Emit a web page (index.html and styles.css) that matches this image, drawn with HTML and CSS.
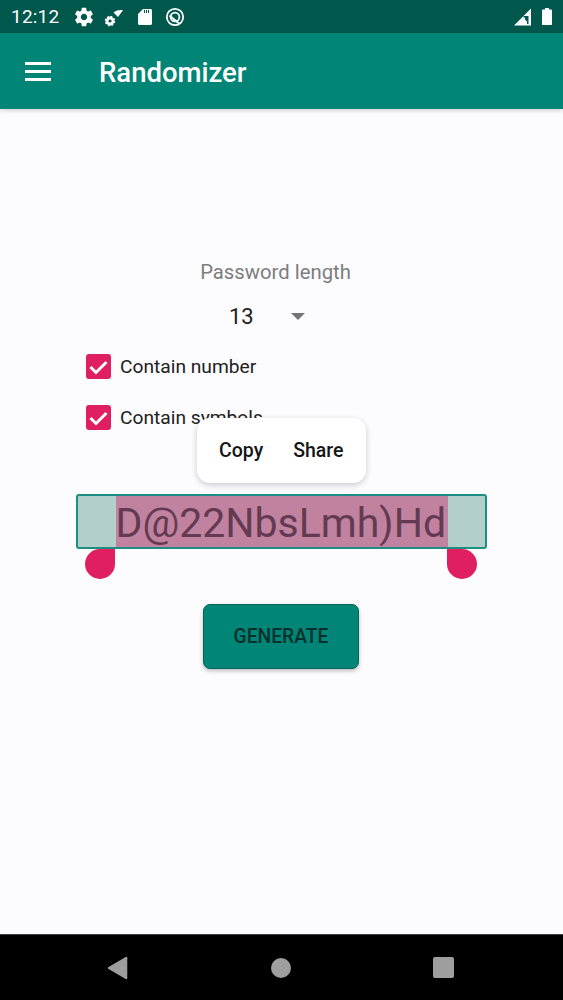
FILE: index.html
```html
<!DOCTYPE html>
<html lang="en">
<head>
  <meta charset="UTF-8" />
  <title>Randomizer</title>
  <link rel="stylesheet" href="styles.css">
</head>
<body>
  <div class="phone">
    <div class="status-bar">
      <span class="clock">12:12</span>
      <div class="status-icons">
        <svg width="22" height="22" viewBox="0 0 24 24"><path fill="#fff" d="M19.4 13c.04-.33.1-.66.1-1s-.06-.67-.1-1l2.1-1.65c.19-.15.24-.42.12-.64l-2-3.46c-.12-.22-.39-.3-.61-.22l-2.49 1c-.52-.4-1.08-.73-1.69-.98l-.38-2.65C14.46 2.18 14.25 2 14 2h-4c-.25 0-.46.18-.49.42l-.38 2.65c-.61.25-1.17.59-1.69.98l-2.49-1c-.23-.09-.49 0-.61.22l-2 3.46c-.13.22-.07.49.12.64L4.57 11c-.04.33-.07.67-.07 1s.03.67.07 1l-2.11 1.65c-.19.15-.24.42-.12.64l2 3.46c.12.22.39.3.61.22l2.49-1c.52.4 1.08.73 1.69.98l.38 2.65c.03.24.24.42.49.42h4c.25 0 .46-.18.49-.42l.38-2.65c.61-.25 1.17-.59 1.69-.98l2.49 1c.23.09.49 0 .61-.22l2-3.46c.12-.22.07-.49-.12-.64L19.4 13zM12 15.5c-1.93 0-3.5-1.57-3.5-3.5s1.57-3.5 3.5-3.5 3.5 1.57 3.5 3.5-1.57 3.5-3.5 3.5z"/></svg>
        <svg class="wifi-icon" width="20" height="20" viewBox="0 0 20 20"><path fill="#fff" d="M9.500 5.500 C12 3.500 15.500 2.700 19 3.200 L14 10 Z"/><circle cx="6" cy="14" r="3" fill="none" stroke="#fff" stroke-width="2.800"/><circle cx="6" cy="14" r="4.600" fill="none" stroke="#fff" stroke-width="1.300" stroke-dasharray="2 1.600"/></svg>
        <svg class="sd-icon" width="16" height="18" viewBox="0 0 16 18"><path fill="#fff" d="M6 1h7.500c.8 0 1.500.7 1.500 1.500v13c0 .8-.7 1.500-1.500 1.500h-11c-.8 0-1.500-.7-1.500-1.500V6z"/><path stroke="#00574b" stroke-width="1" d="M7.500 2v3M9.500 2v3M11.500 2v3"/></svg>
        <svg width="20" height="20" viewBox="0 0 20 20"><circle cx="10" cy="10" r="8.200" fill="none" stroke="#fff" stroke-width="1.800"/><circle cx="10" cy="10" r="4.400" fill="none" stroke="#fff" stroke-width="1.800"/><path stroke="#fff" stroke-width="1.800" d="M4.500 8.500 L14 16.500"/></svg>
      </div>
      <div class="status-right">
        <svg width="18" height="18" viewBox="0 0 18 18"><path fill="#fff" d="M0 17.500 L17 .5 V17.500Z"/><path fill="#00574b" d="M9.500 8h5v8h-1.500v-2.500l-2-2v-2h-1.500z"/></svg>
        <svg width="12" height="19" viewBox="0 0 12 19"><path fill="#fff" d="M4 1h4v1.500h2c.6 0 1 .4 1 1V17c0 .6-.4 1-1 1H2c-.6 0-1-.4-1-1V3.500c0-.6.4-1 1-1h2z"/></svg>
      </div>
    </div>

    <header class="app-bar">
      <div class="menu-icon"><span></span><span></span><span></span></div>
      <h1 class="app-title">Randomizer</h1>
    </header>

    <main class="content">
      <div class="length-label">Password length</div>
      <div class="spinner">
        <span class="spinner-value">13</span>
        <span class="spinner-arrow"></span>
      </div>

      <div class="check-row">
        <span class="checkbox"><svg width="25" height="25" viewBox="0 0 25 25"><path fill="none" stroke="#fff" stroke-width="3" d="M4.500 13l5.500 5.500L20.500 8"/></svg></span>
        <span class="check-label">Contain number</span>
      </div>
      <div class="check-row second">
        <span class="checkbox"><svg width="25" height="25" viewBox="0 0 25 25"><path fill="none" stroke="#fff" stroke-width="3" d="M4.500 13l5.500 5.500L20.500 8"/></svg></span>
        <span class="check-label">Contain symbols</span>
      </div>

      <div class="password-field">
        <span class="selected-text">D@22NbsLmh)Hd</span>
        <span class="handle handle-left"></span>
        <span class="handle handle-right"></span>
        <div class="text-popup">
          <span>Copy</span>
          <span>Share</span>
        </div>
      </div>

      <button class="generate-btn">GENERATE</button>
    </main>

    <nav class="nav-bar">
      <svg width="21" height="24" viewBox="0 0 21 24"><path fill="#9e9e9e" stroke="#9e9e9e" stroke-width="1.500" stroke-linejoin="round" d="M1.500 12 L19.500 1.500 V22.500Z"/></svg>
      <span class="nav-home"></span>
      <span class="nav-recents"></span>
    </nav>
  </div>
</body>
</html>
```

FILE: styles.css
```css
* {
  box-sizing: border-box;
}
body {
  margin: 0;
  font-family: 'Roboto', sans-serif;
  background-color: #fcfcfe;
}
.phone {
  display: flex;
  flex-direction: column;
  width: 563px;
  height: 1000px;
  overflow: hidden;
}

.status-bar {
  display: flex;
  align-items: center;
  height: 33px;
  padding: 0 10px 0 11px;
  background-color: #00574b;
  color: #fff;
}
.clock {
  font-size: 19px;
  letter-spacing: 0.2px;
  width: 62px;
}
.status-icons {
  display: flex;
  align-items: center;
  gap: 12px;
}
.wifi-icon {
  margin-left: -3px;
}
.sd-icon {
  margin-left: 1px;
}
.status-right {
  display: flex;
  align-items: center;
  gap: 9px;
  margin-left: auto;
}

.app-bar {
  display: flex;
  align-items: center;
  height: 76px;
  padding-left: 25px;
  background-color: #008577;
  box-shadow: 0 2px 4px rgba(0,0,0,0.15);
}
.menu-icon {
  display: flex;
  flex-direction: column;
  gap: 5px;
  width: 26px;
  margin-right: 48px;
}
.menu-icon span {
  height: 3px;
  background-color: #fff;
}
.app-title {
  margin: 0;
  padding-top: 2px;
  font-size: 27.500px;
  font-weight: 500;
  color: #fff;
}

.content {
  flex: 1;
  display: flex;
  flex-direction: column;
  padding-top: 150px;
}
.length-label {
  width: 551px;
  text-align: center;
  font-size: 20.300px;
  line-height: 26px;
  color: #7d7d7d;
}
.spinner {
  display: flex;
  align-items: center;
  height: 44px;
  margin-top: 9px;
  padding-left: 229px;
}
.spinner-value {
  font-size: 22px;
  color: #222;
  width: 62px;
}
.spinner-arrow {
  width: 0;
  height: 0;
  border-left: 7px solid transparent;
  border-right: 7px solid transparent;
  border-top: 7px solid #757575;
}

.check-row {
  display: flex;
  align-items: center;
  gap: 9px;
  height: 25px;
  margin: 16px 0 0 86px;
}
.check-row.second {
  margin-top: 26px;
}
.checkbox {
  display: block;
  width: 25px;
  height: 25px;
  border-radius: 3px;
  background-color: #df1f62;
}
.checkbox svg {
  display: block;
}
.check-label {
  font-size: 19.200px;
  color: #212121;
}

.password-field {
  position: relative;
  display: flex;
  justify-content: center;
  width: 411px;
  height: 55px;
  margin: 64px 0 0 76px;
  background-color: #b2cfcc;
  border: 2px solid #1e8e80;
  border-radius: 3px;
}
.selected-text {
  width: 332px;
  font-size: 41px;
  line-height: 54px;
  white-space: nowrap;
  color: #633a52;
  background-color: #c0829f;
}
.handle {
  position: absolute;
  top: 53px;
  width: 30px;
  height: 30px;
  background-color: #df1f62;
}
.handle-left {
  left: 7px;
  border-radius: 50% 0 50% 50%;
}
.handle-right {
  left: 369px;
  border-radius: 0 50% 50% 50%;
}
.text-popup {
  position: absolute;
  top: -78px;
  left: 119px;
  display: flex;
  align-items: center;
  gap: 30px;
  width: 169px;
  height: 65px;
  padding-left: 22px;
  border-radius: 13px;
  background-color: #fff;
  box-shadow: 0 2px 6px rgba(0,0,0,0.2);
  font-size: 19.500px;
  font-weight: 500;
  color: #151515;
}

.generate-btn {
  width: 156px;
  height: 65px;
  margin: 55px 0 0 203px;
  border: 1px solid #0a6358;
  border-radius: 7px;
  background-color: #008577;
  box-shadow: 0 2px 4px rgba(0,0,0,0.25);
  font-family: 'Roboto', sans-serif;
  font-size: 19.300px;
  font-weight: 500;
  color: #07302c;
}

.nav-bar {
  position: relative;
  display: flex;
  align-items: center;
  height: 66px;
  padding-left: 107px;
  background-color: #000;
  border-top: 1px solid #444;
}
.nav-home {
  width: 20px;
  height: 20px;
  margin-left: 143px;
  border-radius: 50%;
  background-color: #9e9e9e;
}
.nav-recents {
  width: 21px;
  height: 21px;
  margin-left: 142px;
  border-radius: 2px;
  background-color: #9e9e9e;
}
```
